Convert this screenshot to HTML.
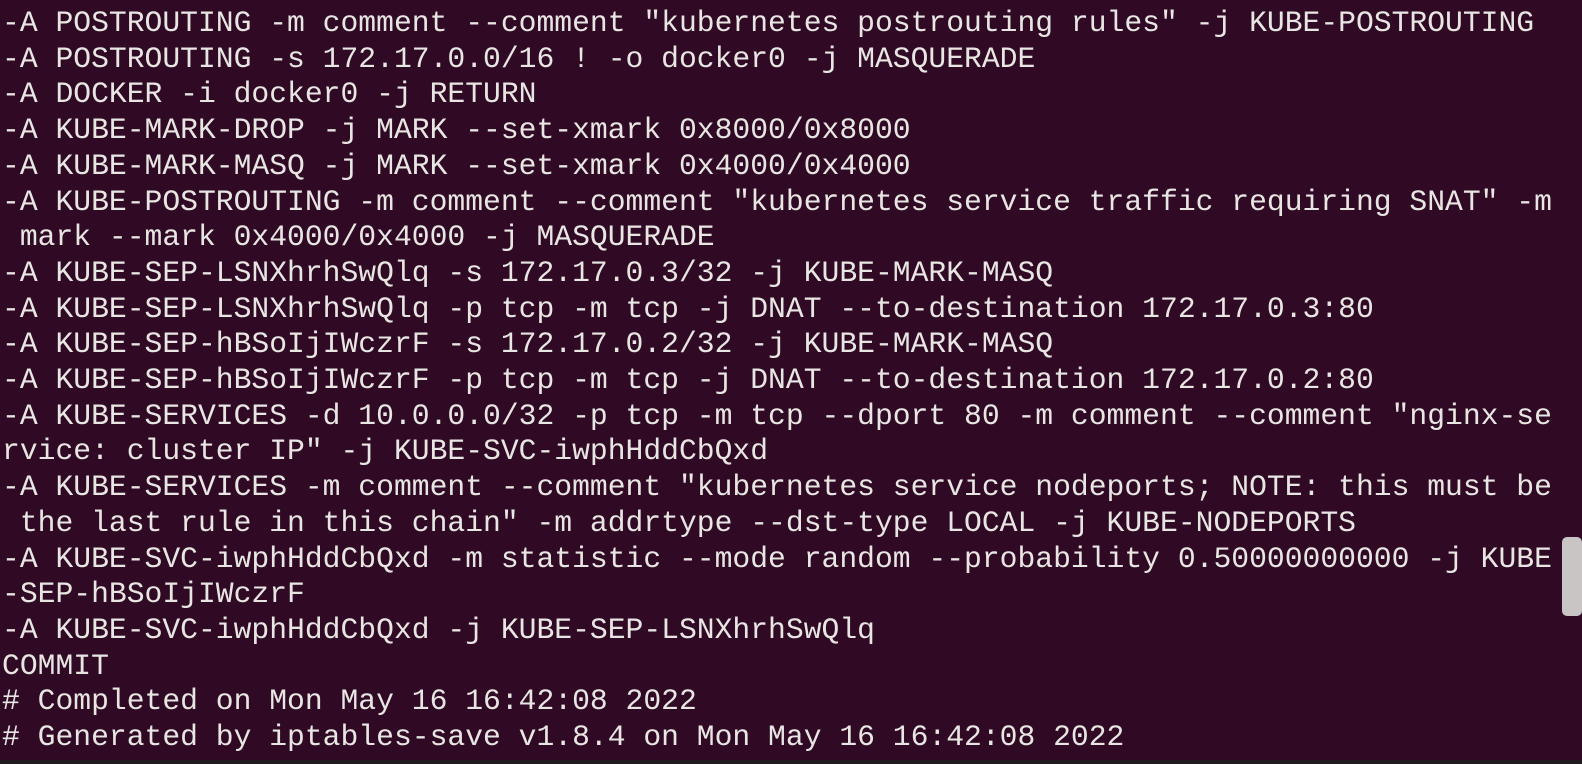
<!DOCTYPE html>
<html><head><style>
html,body{margin:0;padding:0;background:#300a24;width:1582px;height:764px;overflow:hidden}
pre{margin:0;position:absolute;left:2px;top:6px;font-family:"Liberation Mono","DejaVu Sans Mono",monospace;font-size:29.7px;line-height:35.7px;color:#e8e6e3;white-space:pre}
.sb{position:absolute;left:1562px;top:537px;width:20px;height:79px;background:#c9c5c4;border-radius:5px}
.bot{position:absolute;left:0;top:760px;width:1582px;height:4px;background:#211a1f}
</style></head><body>
<pre>-A POSTROUTING -m comment --comment "kubernetes postrouting rules" -j KUBE-POSTROUTING
-A POSTROUTING -s 172.17.0.0/16 ! -o docker0 -j MASQUERADE
-A DOCKER -i docker0 -j RETURN
-A KUBE-MARK-DROP -j MARK --set-xmark 0x8000/0x8000
-A KUBE-MARK-MASQ -j MARK --set-xmark 0x4000/0x4000
-A KUBE-POSTROUTING -m comment --comment "kubernetes service traffic requiring SNAT" -m
 mark --mark 0x4000/0x4000 -j MASQUERADE
-A KUBE-SEP-LSNXhrhSwQlq -s 172.17.0.3/32 -j KUBE-MARK-MASQ
-A KUBE-SEP-LSNXhrhSwQlq -p tcp -m tcp -j DNAT --to-destination 172.17.0.3:80
-A KUBE-SEP-hBSoIjIWczrF -s 172.17.0.2/32 -j KUBE-MARK-MASQ
-A KUBE-SEP-hBSoIjIWczrF -p tcp -m tcp -j DNAT --to-destination 172.17.0.2:80
-A KUBE-SERVICES -d 10.0.0.0/32 -p tcp -m tcp --dport 80 -m comment --comment "nginx-se
rvice: cluster IP" -j KUBE-SVC-iwphHddCbQxd
-A KUBE-SERVICES -m comment --comment "kubernetes service nodeports; NOTE: this must be
 the last rule in this chain" -m addrtype --dst-type LOCAL -j KUBE-NODEPORTS
-A KUBE-SVC-iwphHddCbQxd -m statistic --mode random --probability 0.50000000000 -j KUBE
-SEP-hBSoIjIWczrF
-A KUBE-SVC-iwphHddCbQxd -j KUBE-SEP-LSNXhrhSwQlq
COMMIT
# Completed on Mon May 16 16:42:08 2022
# Generated by iptables-save v1.8.4 on Mon May 16 16:42:08 2022</pre>
<div class="sb"></div>
<div class="bot"></div>
</body></html>
